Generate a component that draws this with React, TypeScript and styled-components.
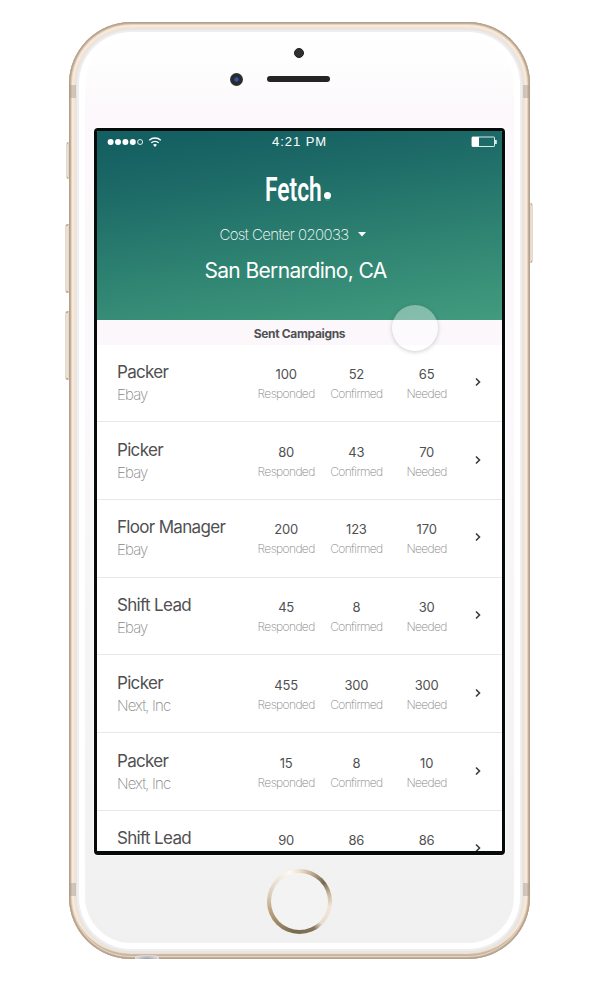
import React from "react";
import styled, { createGlobalStyle } from "styled-components";

const GlobalStyle = createGlobalStyle`
  * { box-sizing: border-box; }
  html, body { margin: 0; background: #fff; }
  body { font-family: Inter, "Liberation Sans", sans-serif; color: #505052; }
`;

const Page = styled.main`
  width: 600px;
  height: 993px;
  padding: 22px 0 0 69px;
  overflow: hidden;
  background: #fff;
`;

const Phone = styled.div`
  position: relative;
  width: 461px;
  height: 937px;
  padding: 0 25px;
  border-radius: 62px;
  display: grid;
  grid-template-rows: 106px 727px 104px;
  background: linear-gradient(#fff 0, #fefefe 40px, #fcf8fb 88px, #fbf9fb 40%, #f3f3f3 82%, #f0f0f0 100%);
  box-shadow:
    inset 0 0 0 1px #b5a08c,
    inset 0 0 0 2px #c3b09b,
    inset 0 0 0 3px #e3d3c0,
    inset 0 -4px 1px 1px #c6b5a0,
    inset 0 0 0 5px #f7eadb,
    inset 0 0 0 7px #f1e4d6,
    inset 0 0 0 8px #e5e4e6,
    inset 0 0 0 10px #eeeef1,
    inset 0 0 1px 16px #fff;
`;

const AntennaBand = styled.span<{ $side: "left" | "right"; $top: number }>`
  position: absolute;
  ${(p) => p.$side}: 0;
  top: ${(p) => p.$top}px;
  width: 7px;
  height: 13px;
  background: rgba(165, 155, 145, 0.45);
`;

const SideButton = styled.span<{ $side: "left" | "right"; $top: number; $height: number; $width: number }>`
  position: absolute;
  ${(p) => p.$side}: -${(p) => p.$width}px;
  top: ${(p) => p.$top}px;
  width: ${(p) => p.$width}px;
  height: ${(p) => p.$height}px;
  border: solid #c9b197;
  border-width: 2px 1px;
  border-color: #c4a98b #e3d8ca;
  border-radius: ${(p) => (p.$side === "left" ? "3px 0 0 3px" : "0 3px 3px 0")};
  background: #eae2da;
`;

const TopBezel = styled.div`
  display: grid;
  grid-template-columns: 173px 63px 1fr;
  grid-template-rows: 26px auto;
  padding-top: 26px;
  justify-items: center;
`;

const Sensor = styled.span`
  grid-column: 2;
  width: 10px;
  height: 10px;
  border-radius: 50%;
  background: #303030;
  border: 1px solid #1d1d1f;
`;

const Camera = styled.span`
  grid-column: 1;
  grid-row: 2;
  justify-self: end;
  margin: -1px 24px 0 0;
  width: 13px;
  height: 13px;
  border-radius: 50%;
  background: radial-gradient(circle, #3458a0 0 1.5px, #22304e 2.5px, #28282b 4px, #303033 6px);
`;

const Speaker = styled.span`
  grid-column: 2;
  grid-row: 2;
  margin-top: 2px;
  width: 63px;
  height: 6px;
  border-radius: 3px;
  background: #222426;
`;

const Screen = styled.div`
  width: 411px;
  height: 727px;
  border: 3px solid #060a09;
  border-bottom-width: 4px;
  border-radius: 4px;
  overflow: hidden;
  background: #fff;
  box-shadow: 0 0 1px 1px rgba(255, 255, 255, 0.8);
  position: relative;
`;

const Header = styled.header`
  height: 189px;
  display: flex;
  flex-direction: column;
  align-items: center;
  color: #fff;
  background: linear-gradient(172deg, #145f61 5%, #1c6967 25%, #2c8070 58%, #3c947a 88%, #419b7d 100%);
`;

const StatusBar = styled.div`
  width: 100%;
  height: 22px;
  padding: 0 5px 0 10px;
  display: grid;
  grid-template-columns: 165px auto 1fr;
  align-items: center;
`;

const Time = styled.span`
  font: 13px/22px "Liberation Sans", sans-serif;
  letter-spacing: 0.95px;
`;

const BatteryIcon = styled.svg`
  justify-self: end;
`;

const Logo = styled.div`
  width: 69px;
  height: 37px;
  margin-top: 17px;
  display: flex;
`;

const LogoWord = styled.span`
  width: 57px;
  font: 600 33px/39px Roboto, sans-serif;
  transform: scaleX(0.69);
  transform-origin: left;
`;

const LogoDot = styled.span`
  width: 7px;
  height: 7px;
  margin: 22px 0 0 2px;
  border-radius: 50%;
  background: #fff;
  box-shadow: 0 3px 0 -1px #2f9870;
`;

const CostCenter = styled.div`
  display: flex;
  align-items: center;
  height: 20px;
  margin: 17px 0 0 -14px;
  font-size: 15px;
  font-weight: 200;
  letter-spacing: -0.6px;
  gap: 9px;
`;

const City = styled.h1`
  margin: 14px 0 0 -8px;
  font-size: 21px;
  line-height: 26px;
  font-weight: 400;
  letter-spacing: -0.65px;
`;

const SectionTitle = styled.h2`
  margin: 0;
  height: 25px;
  background: #fbf7fb;
  text-align: center;
  font-size: 12px;
  line-height: 27px;
  font-weight: 700;
  letter-spacing: -0.34px;
`;

const Row = styled.article`
  height: 77.75px;
  padding: 0 8px 0 20px;
  display: grid;
  grid-template-columns: 134px repeat(3, 70.25px) 32px;
  box-shadow: inset 0 -1px #e8e8e9;

  &:first-of-type {
    height: 77px;
  }
  &:not(:first-of-type) {
    padding-top: 0.5px;
  }
`;

const Role = styled.h3`
  margin: 16px 0 0;
  font-size: 17px;
  line-height: 22px;
  font-weight: 400;
  letter-spacing: -0.68px;
  white-space: nowrap;
`;

const Client = styled.p`
  margin: 0;
  font-size: 15px;
  line-height: 23px;
  font-weight: 200;
  letter-spacing: -0.85px;
  color: #858587;
`;

const Stat = styled.div`
  padding-top: 20px;
  text-align: center;
`;

const Count = styled.div`
  font-size: 13px;
  line-height: 19px;
  font-weight: 400;
  letter-spacing: -0.2px;
`;

const StatLabel = styled.div`
  font-size: 12px;
  line-height: 19px;
  font-weight: 200;
  letter-spacing: -0.62px;
  color: #858587;
`;

const Chevron = styled.svg`
  justify-self: center;
  margin-top: 32px;
`;

const TouchPoint = styled.span`
  position: absolute;
  left: 295px;
  top: 174px;
  width: 46px;
  height: 46px;
  border-radius: 50%;
  background: rgba(255, 255, 255, 0.37);
  box-shadow: 0 1px 4px rgba(60, 50, 50, 0.25);
`;

const BottomBezel = styled.div`
  display: flex;
  justify-content: center;
  padding-top: 14px;
`;

const HomeButton = styled.span`
  width: 65px;
  height: 65px;
  padding: 4px;
  border-radius: 50%;
  background: conic-gradient(#ece0cf 0deg, #c9b498 20deg, #75674f 52deg, #c8b69b 75deg, #f0e6d8 100deg, #e8ddce 135deg, #85745a 152deg, #776a50 190deg, #9c8867 225deg, #c0a67f 255deg, #d9cbb8 280deg, #eee6db 315deg, #fff9f0 342deg, #ece0cf 360deg);
  &::before {
    content: "";
    display: block;
    height: 57px;
    border-radius: 50%;
    background: #f4f3f4;
  }
`;

const BottomGlint = styled.span`
  position: absolute;
  left: 66px;
  bottom: 0;
  width: 24px;
  height: 4px;
  border-radius: 50% 50% 0 0;
  background: radial-gradient(ellipse at bottom, #9a9aa0, #dedee2 70%);
`;

interface Campaign {
  role: string;
  client?: string;
  counts: [number, number, number];
}

const campaigns: Campaign[] = [
  { role: "Packer", client: "Ebay", counts: [100, 52, 65] },
  { role: "Picker", client: "Ebay", counts: [80, 43, 70] },
  { role: "Floor Manager", client: "Ebay", counts: [200, 123, 170] },
  { role: "Shift Lead", client: "Ebay", counts: [45, 8, 30] },
  { role: "Picker", client: "Next, Inc", counts: [455, 300, 300] },
  { role: "Packer", client: "Next, Inc", counts: [15, 8, 10] },
  { role: "Shift Lead", counts: [90, 86, 86] },
];

const statLabels = ["Responded", "Confirmed", "Needed"];

function SignalIcon() {
  return (
    <svg width="56" height="12" viewBox="0 0 56 12" fill="none">
      {[3.6, 11, 18.4, 25.8].map((cx) => (
        <circle key={cx} cx={cx} cy="6" r="3" fill="#fff" />
      ))}
      <circle cx="33.1" cy="6" r="2.5" stroke="#e4f0ee" />
      <path d="M42.2 4.3a8.6 8.6 0 0 1 11.6 0M44.3 6.8a5.6 5.6 0 0 1 7.4 0" stroke="#fff" strokeWidth="1.4" />
      <path d="M46 8.8a3 3 0 0 1 4 0L48 10.9z" fill="#fff" />
    </svg>
  );
}

function CampaignRow({ role, client, counts }: Campaign) {
  return (
    <Row>
      <div>
        <Role>{role}</Role>
        {client && <Client>{client}</Client>}
      </div>
      {counts.map((count, i) => (
        <Stat key={statLabels[i]}>
          <Count>{count}</Count>
          {client && <StatLabel>{statLabels[i]}</StatLabel>}
        </Stat>
      ))}
      <Chevron width="6" height="10" viewBox="0 0 6 10" fill="none">
        <path d="M1 1.5 4.5 5 1 8.5" stroke="#3c3c3e" strokeWidth="1.6" />
      </Chevron>
    </Row>
  );
}

export default function App() {
  return (
    <Page>
      <GlobalStyle />
      <Phone>
        <SideButton $side="left" $top={120} $height={37} $width={3} />
        <SideButton $side="left" $top={202} $height={69} $width={4} />
        <SideButton $side="left" $top={289} $height={69} $width={4} />
        <SideButton $side="right" $top={181} $height={60} $width={3} />
        <AntennaBand $side="left" $top={63} />
        <AntennaBand $side="right" $top={63} />
        <AntennaBand $side="left" $top={861} />
        <AntennaBand $side="right" $top={861} />
        <BottomGlint />
        <TopBezel>
          <Sensor />
          <Camera />
          <Speaker />
        </TopBezel>
        <Screen>
          <Header>
            <StatusBar>
              <SignalIcon />
              <Time>4:21 PM</Time>
              <BatteryIcon width="26" height="12" viewBox="0 0 26 12">
                <rect x="1" y="1" width="22.5" height="9.5" rx="0.6" fill="none" stroke="#d9ebe7" />
                <rect x="1" y="1" width="7" height="9.5" fill="#fff" />
                <rect x="24" y="4" width="1.8" height="4" fill="#d9ebe7" />
              </BatteryIcon>
            </StatusBar>
            <Logo>
              <LogoWord>Fetch</LogoWord>
              <LogoDot />
            </Logo>
            <CostCenter>
              Cost Center 020033
              <svg width="8" height="5" viewBox="0 0 8 5">
                <path d="M0 0h8L4 4.6z" fill="#fff" />
              </svg>
            </CostCenter>
            <City>San Bernardino, CA</City>
          </Header>
          <SectionTitle>Sent Campaigns</SectionTitle>
          {campaigns.map((campaign, index) => (
            <CampaignRow key={index} {...campaign} />
          ))}
          <TouchPoint />
        </Screen>
        <BottomBezel>
          <HomeButton />
        </BottomBezel>
      </Phone>
    </Page>
  );
}
